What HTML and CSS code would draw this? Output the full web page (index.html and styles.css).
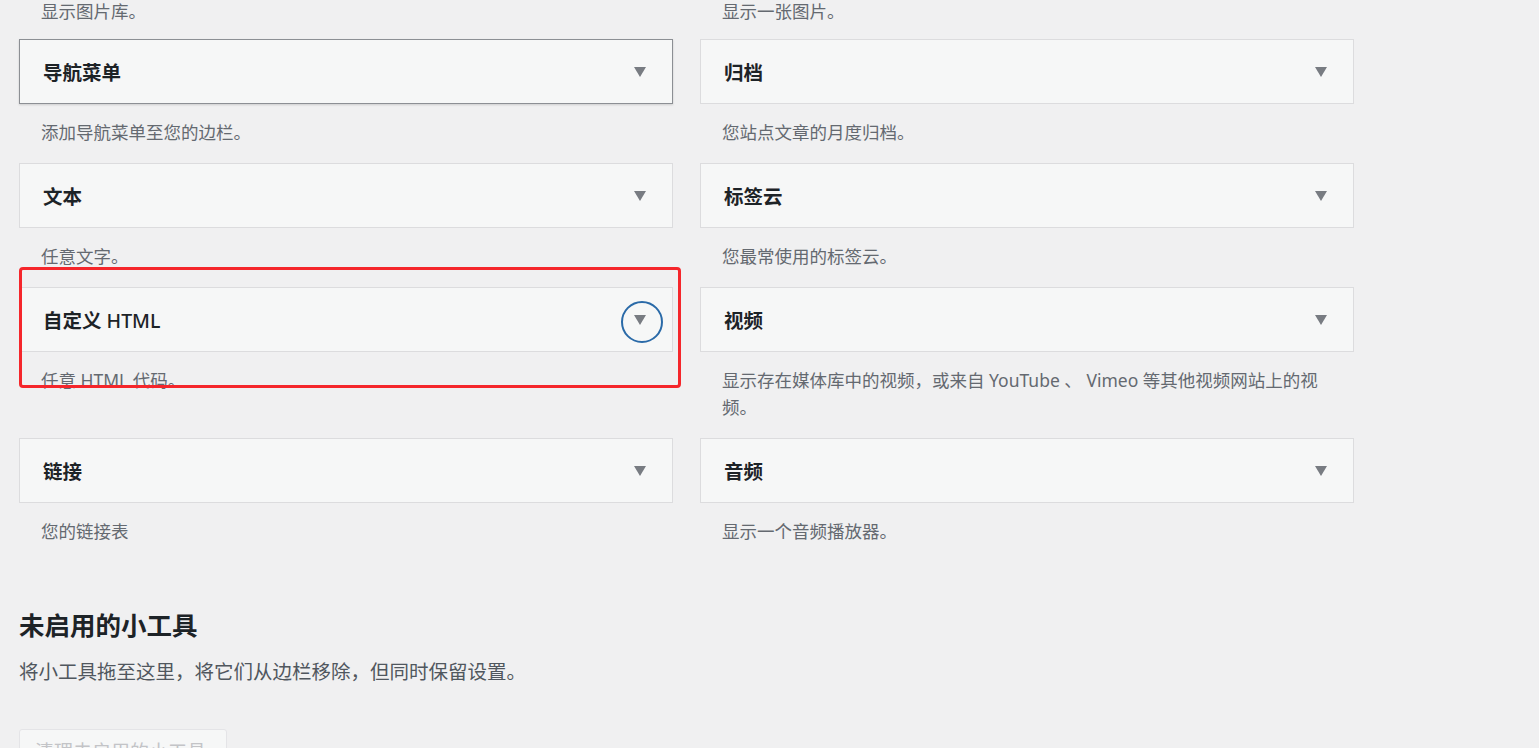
FILE: index.html
```html
<!DOCTYPE html>
<html lang="zh-CN">

<head>
    <meta charset="UTF-8" />
    <meta name="viewport" content="width=device-width, initial-scale=1.0" />
    <title>小工具</title>
    <link rel="stylesheet" href="styles.css">
</head>

<body>

    <div class="wrap">

        <!-- 可用小工具 -->
        <div class="widget-grid">
            <div class="widget">
                <p class="widget-desc first">显示图片库。</p>
            </div>
            <div class="widget">
                <p class="widget-desc first">显示一张图片。</p>
            </div>

            <div class="widget">
                <div class="widget-top hover">
                    <h3>导航菜单</h3>
                    <span class="arrow"></span>
                </div>
                <p class="widget-desc">添加导航菜单至您的边栏。</p>
            </div>
            <div class="widget">
                <div class="widget-top">
                    <h3>归档</h3>
                    <span class="arrow"></span>
                </div>
                <p class="widget-desc">您站点文章的月度归档。</p>
            </div>

            <div class="widget">
                <div class="widget-top">
                    <h3>文本</h3>
                    <span class="arrow"></span>
                </div>
                <p class="widget-desc">任意文字。</p>
            </div>
            <div class="widget">
                <div class="widget-top">
                    <h3>标签云</h3>
                    <span class="arrow"></span>
                </div>
                <p class="widget-desc">您最常使用的标签云。</p>
            </div>

            <div class="widget marked">
                <div class="widget-top">
                    <h3>自定义 <span class="latin">HTML</span></h3>
                    <span class="arrow focus"></span>
                </div>
                <p class="widget-desc">任意 HTML 代码。</p>
                <div class="mark-box"></div>
            </div>
            <div class="widget">
                <div class="widget-top">
                    <h3>视频</h3>
                    <span class="arrow"></span>
                </div>
                <p class="widget-desc">显示存在媒体库中的视频，或来自 YouTube 、 Vimeo 等其他视频网站上的视频。</p>
            </div>

            <div class="widget">
                <div class="widget-top">
                    <h3>链接</h3>
                    <span class="arrow"></span>
                </div>
                <p class="widget-desc">您的链接表</p>
            </div>
            <div class="widget">
                <div class="widget-top">
                    <h3>音频</h3>
                    <span class="arrow"></span>
                </div>
                <p class="widget-desc">显示一个音频播放器。</p>
            </div>
        </div>

        <!-- 未启用的小工具 -->
        <div class="inactive">
            <h2>未启用的小工具</h2>
            <p>将小工具拖至这里，将它们从边栏移除，但同时保留设置。</p>
            <button class="clear-btn" disabled>清理未启用的小工具</button>
        </div>

    </div>

</body>

</html>
```

FILE: styles.css
```css
* {
    box-sizing: border-box;
}

body {
    margin: 0;
    background-color: #f0f0f1;
    font-family: "Noto Sans", "Noto Sans CJK SC", sans-serif;
    color: #1d2327;
    overflow: hidden;
}

.wrap {
    padding: 0 19px;
    margin-top: -2px;
}

.widget-grid {
    display: grid;
    grid-template-columns: 654px 654px;
    column-gap: 27px;
    align-items: start;
}

.widget {
    position: relative;
}

.widget-top {
    height: 65px;
    display: flex;
    align-items: center;
    justify-content: space-between;
    padding: 0 26px 0 23px;
    background-color: #f6f7f7;
    border: 1px solid #dcdcde;
}

.widget-top.hover {
    border-color: #8c8f94;
    box-shadow: 0 1px 2px rgba(0, 0, 0, 0.15);
}

.widget-top h3 {
    margin: 0;
    font-size: 19.5px;
    font-weight: 700;
    color: #1d2327;
}

.widget-top h3 .latin {
    font-weight: 500;
}

.arrow {
    position: relative;
    width: 0;
    height: 0;
    border-left: 6px solid transparent;
    border-right: 6px solid transparent;
    border-top: 10px solid #787c82;
}

/* 蓝色圆圈 */
.arrow.focus::after {
    content: "";
    position: absolute;
    left: -19px;
    top: -24px;
    width: 38px;
    height: 38px;
    border: 2.5px solid #2a6aa8;
    border-radius: 50%;
}

.widget-desc {
    margin: 0;
    padding: 15px 22px 17px;
    font-size: 17.5px;
    line-height: 27px;
    color: #646970;
}

.widget-desc.first {
    padding-top: 0;
    padding-bottom: 14px;
}

/* 红色标注框 */
.mark-box {
    position: absolute;
    top: -20px;
    left: 0;
    width: 662px;
    height: 121px;
    border: 3.5px solid #f5262b;
    border-radius: 4px;
    pointer-events: none;
}

.inactive {
    padding-top: 46px;
}

.inactive h2 {
    margin: 0;
    font-size: 25.5px;
    line-height: 34px;
    font-weight: 700;
    color: #1d2327;
}

.inactive p {
    margin: 16px 0 0;
    font-size: 19.5px;
    line-height: 28px;
    color: #50575e;
}

.clear-btn {
    margin-top: 43px;
    width: 208px;
    height: 40px;
    padding: 6px 15px 0;
    text-align: left;
    font-family: inherit;
    font-size: 19px;
    line-height: 28px;
    color: #c3c4c7;
    background-color: #f6f7f7;
    border: 1px solid #e4e4e7;
    border-radius: 3px;
}
```
